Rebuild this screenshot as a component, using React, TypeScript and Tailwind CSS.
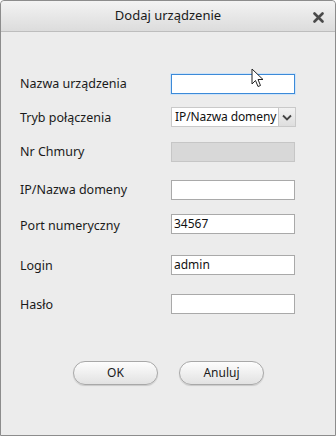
import React from 'react';

const font = { fontFamily: '"Noto Sans", "Open Sans", sans-serif' };

const rows = [
  { label: 'Nazwa urządzenia', kind: 'focus', mt: 'mt-[42px]' },
  { label: 'Tryb połączenia', kind: 'select', mt: 'mt-[13px]', labelOffset: 'pt-[3px]' },
  { label: 'Nr Chmury', kind: 'disabled', mt: 'mt-[15px]', labelOffset: 'pt-[1px]' },
  { label: 'IP/Nazwa domeny', kind: 'text', mt: 'mt-[18px]' },
  { label: 'Port numeryczny', kind: 'text', value: '34567', mt: 'mt-[14px]', labelOffset: 'pt-[4px]' },
  { label: 'Login', kind: 'text', value: 'admin', mt: 'mt-[21px]', labelOffset: 'pt-[3px]' },
  { label: 'Hasło', kind: 'text', mt: 'mt-[19px]', labelOffset: 'pt-[3px]' },
];

const Field: React.FC<{ kind: string; value?: string }> = ({ kind, value }) => {
  if (kind === 'focus') {
    return <div className="w-[124px] h-[20px] bg-white border border-[#3c8ad8] shadow-[0_0_0_1px_#cfe3f7]" />;
  }
  if (kind === 'disabled') {
    return <div className="w-[124px] h-[20px] bg-[#d8d8d8] border border-[#c6c6c6]" />;
  }
  if (kind === 'select') {
    return (
      <div className="w-[125px] h-[20px] flex bg-white border border-[#c9c9c9]">
        <div className="flex-1 min-w-0 pl-[3px] text-[12px] leading-[18px] text-[#111] whitespace-nowrap tracking-[-0.1px]">IP/Nazwa domeny</div>
        <div className="w-[17px] shrink-0 h-full flex items-center justify-center bg-gradient-to-b from-[#f2f2f2] to-[#dedede] border-l border-[#c9c9c9]">
          <svg width="10" height="7" viewBox="0 0 10 7">
            <path d="M1 1.5 L5 5.5 L9 1.5" fill="none" stroke="#444" strokeWidth="1.8" />
          </svg>
        </div>
      </div>
    );
  }
  return (
    <div className="w-[124px] h-[20px] bg-white border border-[#a9a9a9] pl-[2px] text-[12px] leading-[18px] text-[#111]">
      {value}
    </div>
  );
};

export default function App() {
  return (
    <div className="w-[336px] h-[436px] relative overflow-hidden" style={font}>
      <div className="w-full h-full flex flex-col bg-[#ececec] border border-[#8c8c8c] rounded-t-[4px]">
        <div className="h-[31px] shrink-0 relative flex items-center justify-center bg-gradient-to-b from-[#f3f3f3] to-[#dcdcdc] border-b border-[#bdbdbd] rounded-t-[4px]">
          <span className="text-[13px] text-[#1a1a1a]">Dodaj urządzenie</span>
          <svg className="absolute right-[11px] top-[11px]" width="11" height="11" viewBox="0 0 11 11">
            <path d="M1.5 1.5 L9.5 9.5 M9.5 1.5 L1.5 9.5" stroke="#4a4a4a" strokeWidth="2.6" strokeLinecap="round" />
          </svg>
        </div>

        <div className="flex flex-col">
          {rows.map((r, i) => (
            <div key={i} className={`flex items-center h-[20px] ${r.mt}`}>
              <div className={`w-[170px] pl-[19px] text-[12.5px] text-[#1a1a1a] whitespace-nowrap ${r.labelOffset ?? ''}`}>{r.label}</div>
              <Field kind={r.kind} value={r.value} />
            </div>
          ))}
        </div>

        <div className="flex gap-[21px] pl-[72px] mt-[47px]">
          {['OK', 'Anuluj'].map((t) => (
            <button
              key={t}
              className="w-[85px] h-[24px] rounded-[12px] border border-[#a8a8a8] bg-gradient-to-b from-[#fdfdfd] to-[#e2e2e2] text-[12px] text-[#1a1a1a] shadow-[0_1px_1px_rgba(0,0,0,0.15)]"
            >
              {t}
            </button>
          ))}
        </div>
      </div>

      <svg className="absolute left-[251px] top-[68px]" width="14" height="21" viewBox="0 0 14 21">
        <path d="M1 1 L1 16 L4.5 12.5 L7 18.5 L9.5 17.5 L7 11.5 L12 11.5 Z" fill="#fff" stroke="#222" strokeWidth="1" strokeLinejoin="round" />
      </svg>
    </div>
  );
}
